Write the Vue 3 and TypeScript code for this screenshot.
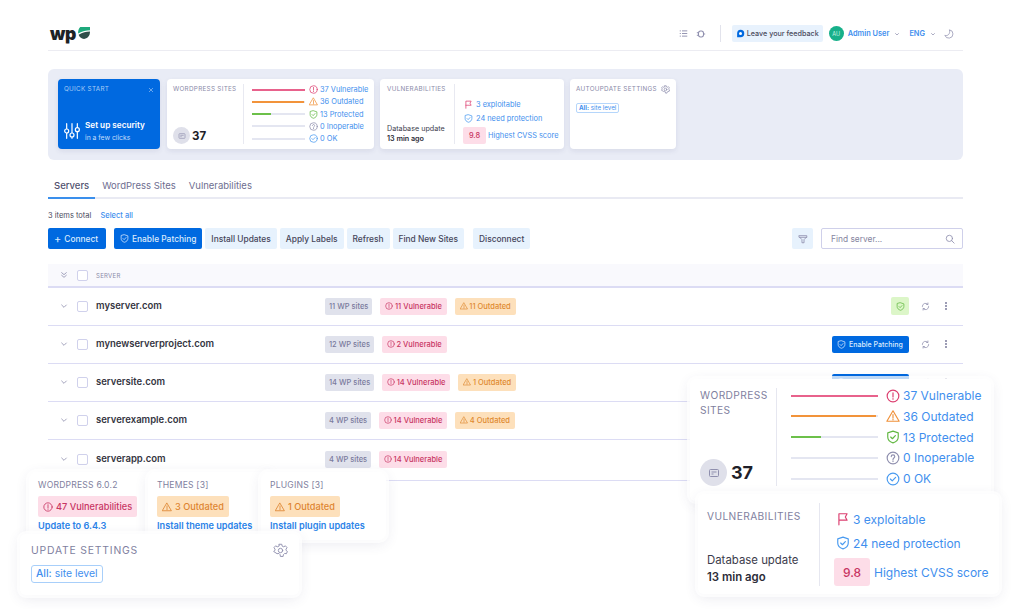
<script setup lang="ts">
type Tone = 'red' | 'orange' | 'green' | 'gray' | 'blue'

interface Status {
  label: string
  icon: string
  tone: Tone
  fill: number
  color: string
}

const statuses: Status[] = [
  { label: '37 Vulnerable', icon: 'i-alert', tone: 'red', fill: 100, color: '#e8628c' },
  { label: '36 Outdated', icon: 'i-warn', tone: 'orange', fill: 98, color: '#f2933a' },
  { label: '13 Protected', icon: 'i-shield', tone: 'green', fill: 35, color: '#6cc04a' },
  { label: '0 Inoperable', icon: 'i-help', tone: 'gray', fill: 0, color: '#e4e6f1' },
  { label: '0 OK', icon: 'i-check', tone: 'blue', fill: 0, color: '#e4e6f1' },
]

const tabs = ['Servers', 'WordPress Sites', 'Vulnerabilities']
const toolButtons = ['Install Updates', 'Apply Labels', 'Refresh', 'Find New Sites']

const servers = [
  { name: 'myserver.com', sites: '11 WP sites', vulnerable: '11 Vulnerable', outdated: '11 Outdated', action: 'ok' },
  { name: 'mynewserverproject.com', sites: '12 WP sites', vulnerable: '2 Vulnerable', outdated: '', action: 'patch' },
  { name: 'serversite.com', sites: '14 WP sites', vulnerable: '14 Vulnerable', outdated: '1 Outdated', action: 'patch' },
  { name: 'serverexample.com', sites: '4 WP sites', vulnerable: '14 Vulnerable', outdated: '4 Outdated', action: 'patch' },
  { name: 'serverapp.com', sites: '4 WP sites', vulnerable: '14 Vulnerable', outdated: '', action: 'patch' },
]
</script>

<template>
  <div class="page">
    <svg class="sprite" aria-hidden="true">
      <symbol id="i-alert" viewBox="0 0 24 24"><circle cx="12" cy="12" r="10" /><path d="M12 6.500v7M12 16.500v1" /></symbol>
      <symbol id="i-warn" viewBox="0 0 24 24"><path d="M12 3 22.500 21h-21zM12 9.500v6M12 17.500v1" /></symbol>
      <symbol id="i-shield" viewBox="0 0 24 24"><path d="M12 2 21 5v7c0 5-3.600 8.400-9 10-5.400-1.600-9-5-9-10V5zM8 12l3 3 5-5.500" /></symbol>
      <symbol id="i-help" viewBox="0 0 24 24"><circle cx="12" cy="12" r="10" /><path d="M9 9.500c0-4 6-4 6 0 0 2.500-3 2.500-3 5M12 17v1" /></symbol>
      <symbol id="i-check" viewBox="0 0 24 24"><circle cx="12" cy="12" r="10" /><path d="m7.500 12 3.200 3.200 5.800-6" /></symbol>
      <symbol id="i-flag" viewBox="0 0 24 24"><path d="M5 22V3h14l-3 5.500 3 5.500H5" /></symbol>
      <symbol id="i-gear" viewBox="0 0 24 24"><circle cx="12" cy="12" r="3.500" /><path d="M10 2h4l.6 3 2.600 1.100L19.800 4.500l2.700 3-1.800 2.400.3 2.100 2 1.500-1.500 3.600-2.900-.4-2 2-.4 2.800h-4.400l-.4-2.800-2-2-2.900.4L1 13.500l2-1.500.3-2.100L1.500 7.500l2.700-3 2.600 1.600L9.400 5z" /></symbol>
      <symbol id="i-search" viewBox="0 0 24 24"><circle cx="10.500" cy="10.500" r="7.500" /><path d="m16 16 6 6" /></symbol>
      <symbol id="i-filter" viewBox="0 0 24 24"><path d="M3 4h18v3l-6.500 6.500V21h-5v-7.500L3 7zM3 8h18" /></symbol>
      <symbol id="i-refresh" viewBox="0 0 24 24"><path d="M20.500 12a8.500 8.500 0 0 1-15 5.500M3.500 12a8.500 8.500 0 0 1 15-5.500M18.500 2.500v4h-4M5.500 21.500v-4h4" /></symbol>
      <symbol id="i-chevron" viewBox="0 0 24 24"><path d="m5 9 7 7 7-7" /></symbol>
      <symbol id="i-server" viewBox="0 0 24 24"><rect x="3" y="5" width="18" height="14" rx="2" /><path d="M7 10h10M7 14h4" /></symbol>
    </svg>

    <header class="topbar">
      <div class="logo">
        <span class="logo-text">wp</span>
        <svg class="logo-mark" viewBox="0 0 24 24"><path d="M6 2h18v6C17 8 10 10 2 14c0-5 1-9 4-12z" fill="#1ea97c" /><path d="M3 16c7-4 14-6 21-6 0 7-3 12-11 14C8 23 4 20 3 16z" fill="#2f4f4a" /></svg>
      </div>
      <div class="top-actions">
        <svg class="top-icon" viewBox="0 0 24 24"><path d="M2 5h3M8 5h14M2 12h3M8 12h14M2 19h3M8 19h14" /></svg>
        <svg class="top-icon bug" viewBox="0 0 24 24"><rect x="6" y="5" width="12" height="14" rx="5" /><path d="M2 9h4M2 15h4M18 12h4" /></svg>
        <span class="top-divider" />
        <span class="feedback">
          <svg class="feedback-icon" viewBox="0 0 24 24"><path d="M12 2a10 10 0 0 1 0 20H3V12A10 10 0 0 1 12 2z" fill="#0069e0" /><circle cx="12" cy="12" r="4" fill="#fff" /></svg>
          Leave your feedback
        </span>
        <span class="avatar">AU</span>
        <span class="user">Admin User</span>
        <svg class="mini-chevron" viewBox="0 0 24 24"><use href="#i-chevron" /></svg>
        <span class="user lang">ENG</span>
        <svg class="mini-chevron" viewBox="0 0 24 24"><use href="#i-chevron" /></svg>
        <svg class="moon" viewBox="0 0 24 24"><path d="M13 2a10 10 0 1 1-11 13c6 3 14-3 11-13z" /></svg>
      </div>
    </header>

    <section class="summary">
      <div class="card quick">
        <div class="quick-head">
          <span>QUICK START</span>
          <svg class="close" viewBox="0 0 24 24"><path d="m4 4 16 16M20 4 4 20" /></svg>
        </div>
        <div class="quick-body">
          <svg class="sliders" viewBox="0 0 24 24"><path d="M4 1v8M4 15v8M12 1v14M12 21v2M20 1v6M20 13v10" /><circle cx="4" cy="12" r="3" /><circle cx="12" cy="18" r="3" /><circle cx="20" cy="10" r="3" /></svg>
          <div>
            <div class="quick-title">Set up security</div>
            <div class="quick-sub">in a few clicks</div>
          </div>
        </div>
      </div>

      <div class="card sites">
        <div class="sites-left">
          <div class="card-label">WORDPRESS SITES</div>
          <div class="count">
            <span class="count-icon"><svg viewBox="0 0 24 24"><use href="#i-server" /></svg></span>
            <b>37</b>
          </div>
        </div>
        <div class="sites-right">
          <div v-for="s in statuses" :key="s.label" class="status">
            <span class="bar"><span class="bar-fill" :style="{ width: s.fill + '%', background: s.color }" /></span>
            <svg class="ico" :class="s.tone" viewBox="0 0 24 24"><use :href="'#' + s.icon" /></svg>
            <span>{{ s.label }}</span>
          </div>
        </div>
      </div>

      <div class="card vulns">
        <div class="vulns-left">
          <div class="card-label">VULNERABILITIES</div>
          <div class="db">Database update<br><b>13 min ago</b></div>
        </div>
        <div class="vulns-right">
          <div class="vline"><svg class="ico red" viewBox="0 0 24 24"><use href="#i-flag" /></svg>3 exploitable</div>
          <div class="vline"><svg class="ico blue" viewBox="0 0 24 24"><use href="#i-shield" /></svg>24 need protection</div>
          <div class="vline score-line"><span class="score">9.8</span>Highest CVSS score</div>
        </div>
      </div>

      <div class="card auto">
        <div class="auto-head">
          <span class="card-label">AUTOUPDATE SETTINGS</span>
          <svg class="ico gray" viewBox="0 0 24 24"><use href="#i-gear" /></svg>
        </div>
        <span class="level"><b>All:</b> site level</span>
      </div>
    </section>

    <nav class="tabs">
      <span v-for="(t, i) in tabs" :key="t" class="tab" :class="{ active: i === 0 }">{{ t }}</span>
    </nav>

    <div class="total">3 items total <a>Select all</a></div>

    <div class="toolbar">
      <button class="btn primary connect"><span class="plus">+</span> Connect</button>
      <button class="btn primary patch">
        <svg class="ico" viewBox="0 0 24 24"><use href="#i-shield" /></svg>
        Enable Patching
      </button>
      <button v-for="b in toolButtons" :key="b" class="btn">{{ b }}</button>
      <button class="btn disconnect">Disconnect</button>
      <button class="btn filter"><svg class="ico gray" viewBox="0 0 24 24"><use href="#i-filter" /></svg></button>
      <div class="search">
        <span>Find server...</span>
        <svg class="ico gray" viewBox="0 0 24 24"><use href="#i-search" /></svg>
      </div>
    </div>

    <div class="table">
      <div class="thead">
        <svg class="chev" viewBox="0 0 24 24"><path d="m5 5 7 6 7-6M5 13l7 6 7-6" /></svg>
        <span class="box" />
        <span class="th">SERVER</span>
      </div>
      <div v-for="s in servers" :key="s.name" class="row">
        <svg class="chev" viewBox="0 0 24 24"><use href="#i-chevron" /></svg>
        <span class="box" />
        <span class="name">{{ s.name }}</span>
        <div class="badges">
          <span class="badge grey">{{ s.sites }}</span>
          <span class="badge pink"><svg class="ico" viewBox="0 0 24 24"><use href="#i-alert" /></svg>{{ s.vulnerable }}</span>
          <span v-if="s.outdated" class="badge amber"><svg class="ico" viewBox="0 0 24 24"><use href="#i-warn" /></svg>{{ s.outdated }}</span>
        </div>
        <div class="row-actions">
          <span v-if="s.action === 'ok'" class="ok-box"><svg class="ico green" viewBox="0 0 24 24"><use href="#i-shield" /></svg></span>
          <button v-else class="row-patch"><svg class="ico" viewBox="0 0 24 24"><use href="#i-shield" /></svg>Enable Patching</button>
          <svg class="ico gray refresh" viewBox="0 0 24 24"><use href="#i-refresh" /></svg>
          <span class="dots" />
        </div>
      </div>
    </div>

    <!-- floating callouts over the table -->
    <div class="float f-sites">
      <div class="f-sites-left">
        <div class="f-label">WORDPRESS<br>SITES</div>
        <div class="f-count">
          <span class="f-count-icon"><svg viewBox="0 0 24 24"><use href="#i-server" /></svg></span>
          <b>37</b>
        </div>
      </div>
      <div class="f-sites-right">
        <div v-for="s in statuses" :key="s.label" class="f-status">
          <span class="f-bar"><span class="bar-fill" :style="{ width: s.fill + '%', background: s.color }" /></span>
          <svg class="ico" :class="s.tone" viewBox="0 0 24 24"><use :href="'#' + s.icon" /></svg>
          <span>{{ s.label }}</span>
        </div>
      </div>
    </div>

    <div class="float f-vulns">
      <div class="f-vulns-left">
        <div class="f-label f-vulns-label">VULNERABILITIES</div>
        <div class="f-db">Database update<br><b>13 min ago</b></div>
      </div>
      <div class="f-vulns-right">
        <div class="f-line"><svg class="ico red" viewBox="0 0 24 24"><use href="#i-flag" /></svg>3 exploitable</div>
        <div class="f-line"><svg class="ico blue" viewBox="0 0 24 24"><use href="#i-shield" /></svg>24 need protection</div>
        <div class="f-line f-score-line"><span class="f-score">9.8</span>Highest CVSS score</div>
      </div>
    </div>

    <div class="float mini m-wp">
      <div class="m-label">WORDPRESS 6.0.2</div>
      <span class="m-chip pink"><svg class="ico" viewBox="0 0 24 24"><use href="#i-alert" /></svg>47 Vulnerabilities</span>
      <a class="m-link">Update to 6.4.3</a>
    </div>
    <div class="float mini m-themes">
      <div class="m-label">THEMES [3]</div>
      <span class="m-chip amber"><svg class="ico" viewBox="0 0 24 24"><use href="#i-warn" /></svg>3 Outdated</span>
      <a class="m-link">Install theme updates</a>
    </div>
    <div class="float mini m-plugins">
      <div class="m-label">PLUGINS [3]</div>
      <span class="m-chip amber"><svg class="ico" viewBox="0 0 24 24"><use href="#i-warn" /></svg>1 Outdated</span>
      <a class="m-link">Install plugin updates</a>
    </div>

    <div class="float m-update">
      <div class="m-update-head">
        <span>UPDATE SETTINGS</span>
        <svg class="ico gray" viewBox="0 0 24 24"><use href="#i-gear" /></svg>
      </div>
      <span class="m-level"><b>All:</b> site level</span>
    </div>
  </div>
</template>

<style>
html,
body {
  margin: 0;
  background: #fff;
}
</style>

<style scoped>
.page {
  position: relative;
  width: 1024px;
  height: 609px;
  overflow: hidden;
  box-sizing: border-box;
  padding: 17px 61px 0 48px;
  background: #fff;
  font-family: Inter, "Liberation Sans", sans-serif;
  color: #3c3c4c;
}

.sprite {
  position: absolute;
  width: 0;
  height: 0;
}

.ico {
  flex: none;
  fill: none;
  stroke: currentColor;
  stroke-width: 2;
  stroke-linecap: round;
  stroke-linejoin: round;
}

.red { color: #dc3f70; }
.orange { color: #f0913a; }
.green { color: #62b842; }
.gray { color: #8f8fae; }
.blue { color: #4a9bf0; }

/* top bar */
.topbar {
  display: flex;
  align-items: center;
  justify-content: space-between;
  height: 34px;
  padding: 0 9px 0 2px;
  border-bottom: 1px solid #ececf2;
  box-sizing: border-box;
}

.logo {
  display: flex;
  align-items: center;
  gap: 1px;
}

.logo-text {
  font-size: 17.500px;
  font-weight: 900;
  line-height: 20px;
  letter-spacing: -0.4px;
  color: #1d2326;
}

.logo-mark {
  width: 13px;
  height: 13px;
  margin-top: -2px;
}

.top-actions {
  display: flex;
  align-items: center;
}

.top-icon {
  width: 9px;
  height: 9px;
  fill: none;
  stroke: #8f8fae;
  stroke-width: 2.500;
  margin-right: 8px;
}

.top-icon.bug {
  width: 10px;
  height: 10px;
  margin-right: 14px;
}

.top-divider {
  width: 1px;
  height: 17px;
  background: #e2e3ec;
  margin-right: 11px;
}

.feedback {
  display: flex;
  align-items: center;
  gap: 2px;
  height: 17px;
  padding: 0 4px;
  border-radius: 2px;
  background: #e8f2fd;
  font-size: 7.200px;
  font-weight: 500;
  color: #4a4a5c;
}

.feedback-icon {
  width: 9px;
  height: 9px;
}

.avatar {
  display: flex;
  align-items: center;
  justify-content: center;
  width: 15px;
  height: 15px;
  margin: 0 4px 0 6px;
  border-radius: 50%;
  background: #17b08a;
  color: #c8f0e4;
  font-size: 5.500px;
}

.user {
  font-size: 7.400px;
  font-weight: 600;
  color: #3f8fee;
}

.lang {
  margin-left: 9px;
}

.mini-chevron {
  width: 6px;
  height: 6px;
  margin-left: 5px;
  fill: none;
  stroke: #8f8fae;
  stroke-width: 3;
}

.moon {
  width: 10px;
  height: 10px;
  margin-left: 8px;
  fill: none;
  stroke: #8f8fae;
  stroke-width: 1.800;
}

/* summary strip */
.summary {
  display: flex;
  gap: 6px;
  box-sizing: border-box;
  height: 91px;
  margin-top: 18px;
  padding: 10px;
  border-radius: 6px;
  background: #e9ecf6;
}

.card {
  box-sizing: border-box;
  height: 70px;
  border-radius: 4px;
  background: #fff;
  box-shadow: 0 2px 5px rgba(70, 70, 120, 0.1);
}

.card-label {
  font-size: 6.300px;
  letter-spacing: 0.3px;
  line-height: 9px;
  color: #8a8aa8;
}

.quick {
  display: flex;
  flex-direction: column;
  justify-content: space-between;
  width: 102px;
  margin-right: 1px;
  padding: 6px 6px 0;
  background: #0069e0;
  color: #fff;
}

.quick-head {
  display: flex;
  align-items: center;
  justify-content: space-between;
  font-size: 6.300px;
  letter-spacing: 0.3px;
  line-height: 9px;
  color: #a9cdf6;
}

.close {
  width: 6px;
  height: 6px;
  fill: none;
  stroke: #cfe3fb;
  stroke-width: 2;
}

.quick-body {
  display: flex;
  align-items: center;
  gap: 5px;
  margin-bottom: 6px;
}

.sliders {
  width: 16px;
  height: 18px;
  fill: #0069e0;
  stroke: #fff;
  stroke-width: 1.800;
  stroke-linecap: round;
}

.quick-title {
  font-size: 8.200px;
  font-weight: 600;
  line-height: 12px;
}

.quick-sub {
  margin-top: 2px;
  font-size: 6.800px;
  line-height: 10px;
  color: #c3dcfa;
}

.sites {
  display: flex;
  width: 207px;
  padding: 5px 0 5px 6px;
}

.sites-left {
  display: flex;
  flex-direction: column;
  justify-content: space-between;
  width: 70px;
  border-right: 1px solid #e8e9f1;
}

.sites-left .card-label,
.vulns-left .card-label {
  margin-top: 1px;
}

.count {
  display: flex;
  align-items: center;
  gap: 2px;
}

.count b {
  font-size: 11.500px;
  font-weight: 700;
  color: #1f1f29;
}

.count-icon {
  display: flex;
  align-items: center;
  justify-content: center;
  width: 17px;
  height: 17px;
  border-radius: 50%;
  background: #dfe0ea;
}

.count-icon svg {
  width: 8px;
  height: 8px;
  fill: none;
  stroke: #8f8fae;
  stroke-width: 2;
}

.sites-right {
  display: flex;
  flex-direction: column;
  justify-content: space-between;
  margin-left: 8px;
}

.status {
  display: flex;
  align-items: center;
  height: 11px;
  font-size: 7.400px;
  color: #3f8fee;
}

.status .ico {
  width: 9px;
  height: 9px;
  margin: 0 2px 0 4px;
}

.bar {
  width: 53px;
  height: 2px;
  background: #e4e6f1;
}

.bar-fill {
  display: block;
  height: 100%;
}

.vulns {
  display: flex;
  width: 184px;
  padding: 5px 0 5px 7px;
}

.vulns-left {
  display: flex;
  flex-direction: column;
  justify-content: space-between;
  width: 67px;
  border-right: 1px solid #e8e9f1;
}

.db {
  font-size: 7.200px;
  line-height: 10px;
  color: #3c3c4c;
}

.db b {
  font-weight: 600;
  color: #2c2c38;
}

.vulns-right {
  display: flex;
  flex-direction: column;
  justify-content: flex-end;
  margin-left: 8px;
}

.vline {
  display: flex;
  align-items: center;
  gap: 3px;
  height: 14px;
  font-size: 7.400px;
  color: #3f8fee;
}

.vline .ico {
  width: 9px;
  height: 9px;
  margin-left: 1px;
}

.score-line {
  height: 17px;
  margin-top: 2px;
  gap: 2px;
}

.score {
  display: flex;
  align-items: center;
  justify-content: center;
  width: 23px;
  height: 17px;
  border-radius: 2px;
  background: #fddde8;
  color: #c83563;
  font-weight: 500;
}

.auto {
  width: 106px;
  padding: 6px 6px;
}

.auto-head {
  display: flex;
  align-items: center;
  justify-content: space-between;
}

.auto-head .ico {
  width: 9px;
  height: 9px;
}

.level {
  display: inline-block;
  margin-top: 3px;
  padding: 0 2px;
  border: 1px solid #b5d6fb;
  border-radius: 2px;
  font-size: 6.200px;
  line-height: 8px;
  color: #3f8fee;
}

.level b {
  font-weight: 700;
}

/* tabs */
.tabs {
  display: flex;
  gap: 1px;
  height: 29px;
  margin-top: 10px;
  box-sizing: border-box;
  border-bottom: 2px solid #e9eaf3;
}

.tab {
  height: 29px;
  box-sizing: border-box;
  padding: 0 6px;
  font-size: 9.500px;
  line-height: 31px;
  color: #6e6e90;
}

.tab.active {
  padding: 0 6px;
  border-bottom: 2px solid #3a8fec;
  color: #50506e;
  font-weight: 500;
}

.total {
  margin-top: 12px;
  font-size: 7.500px;
  line-height: 10px;
  color: #4a4a5c;
}

.total a {
  margin-left: 7px;
  color: #3f8fee;
  font-weight: 500;
}

/* toolbar */
.toolbar {
  display: flex;
  align-items: center;
  gap: 3px;
  height: 21px;
  margin-top: 7px;
}

.btn {
  height: 21px;
  padding: 0 6px;
  border: 0;
  border-radius: 2px;
  background: #e7f2fd;
  font-family: inherit;
  font-size: 8.400px;
  font-weight: 500;
  color: #45455a;
}

.btn.primary {
  display: flex;
  align-items: center;
  background: #0069e0;
  color: #dcebfd;
}

.connect {
  width: 58px;
  gap: 3px;
  margin-right: 5px;
}

.plus {
  font-size: 11px;
  font-weight: 400;
}

.patch {
  gap: 3px;
}

.patch .ico {
  width: 9px;
  height: 9px;
}

.disconnect {
  margin-left: 6px;
}

.filter {
  display: flex;
  align-items: center;
  justify-content: center;
  width: 21px;
  padding: 0;
  margin-left: auto;
  margin-right: 5px;
}

.filter .ico {
  width: 10px;
  height: 10px;
}

.search {
  display: flex;
  align-items: center;
  justify-content: space-between;
  box-sizing: border-box;
  width: 142px;
  height: 21px;
  padding: 0 7px 0 9px;
  border: 1px solid #cfd0ea;
  border-radius: 2px;
  font-size: 8.400px;
  color: #8585a0;
}

.search .ico {
  width: 10px;
  height: 10px;
}

/* table */
.table {
  margin-top: 15px;
}

.thead,
.row {
  display: flex;
  align-items: center;
  box-sizing: border-box;
  padding-left: 12px;
  border-bottom: 1px solid #dcdcf4;
}

.thead {
  height: 24px;
  background: #f9f9fd;
  border-bottom-width: 2px;
}

.row {
  height: 38px;
  padding-bottom: 1px;
}

.row:last-child {
  height: 41px;
  padding-bottom: 2px;
}

.chev {
  width: 8px;
  height: 8px;
  fill: none;
  stroke: #8f8fae;
  stroke-width: 2.500;
  stroke-linecap: round;
  stroke-linejoin: round;
}

.box {
  flex: none;
  box-sizing: border-box;
  width: 11px;
  height: 11px;
  margin: 0 8px 0 9px;
  border: 1px solid #d0d1ec;
  border-radius: 2px;
  background: #fff;
}

.th {
  font-size: 6px;
  letter-spacing: 0.3px;
  color: #8a8aa8;
}

.name {
  flex: none;
  width: 229px;
  font-size: 9.500px;
  font-weight: 600;
  color: #35353f;
  margin-top: -2px;
}

.badges {
  display: flex;
  gap: 8px;
}

.badge {
  display: flex;
  align-items: center;
  gap: 1.500px;
  height: 17px;
  padding: 0 4px;
  border-radius: 2px;
  font-size: 7.500px;
  font-weight: 500;
}

.badge .ico {
  width: 8px;
  height: 8px;
}

.badge.grey {
  background: #e0e2ec;
  color: #7a7a9c;
}

.badge.pink {
  padding: 0 5px;
  background: #fddde8;
  color: #c83563;
}

.badge.amber {
  padding: 0 5px;
  background: #fde0bb;
  color: #e08a30;
}

.row-actions {
  display: flex;
  align-items: center;
  margin-left: auto;
}

.ok-box {
  display: flex;
  align-items: center;
  justify-content: center;
  width: 18px;
  height: 18px;
  border-radius: 2px;
  background: #dcf6c8;
}

.ok-box .ico {
  width: 9px;
  height: 9px;
}

.row-patch {
  display: flex;
  align-items: center;
  gap: 3px;
  height: 17px;
  width: 77px;
  padding: 0 5px;
  border: 0;
  border-radius: 2px;
  background: #0069e0;
  font-family: inherit;
  font-size: 7px;
  font-weight: 500;
  color: #dcebfd;
}

.row-patch .ico {
  width: 9px;
  height: 9px;
}

.refresh {
  width: 9px;
  height: 9px;
  margin-left: 12px;
}

.dots {
  position: relative;
  width: 2px;
  height: 2px;
  margin: 0 16px 0 15px;
  border-radius: 50%;
  background: #7d7d9c;
  box-shadow: 0 -3px 0 #7d7d9c, 0 3px 0 #7d7d9c;
}

/* floating callouts */
.float {
  position: absolute;
  box-sizing: border-box;
  border-radius: 6px;
  background: #fff;
  box-shadow: 0 0 0 3px rgba(255, 255, 255, 0.75), 0 3px 14px rgba(60, 60, 110, 0.12);
}

.f-sites {
  left: 690px;
  top: 379px;
  display: flex;
  width: 301px;
  height: 122px;
  padding: 9px 0 15px 10px;
}

.f-sites-left {
  display: flex;
  flex-direction: column;
  justify-content: space-between;
  width: 76px;
  border-right: 1px solid #e6e7f0;
}

.f-label {
  font-size: 10.200px;
  letter-spacing: 0.4px;
  line-height: 15px;
  color: #7f7fa0;
}

.f-vulns-label {
  margin-top: 6px;
}

.f-count {
  display: flex;
  align-items: center;
  gap: 4px;
}

.f-count b {
  font-size: 18px;
  font-weight: 700;
  color: #1f1f29;
}

.f-count-icon {
  display: flex;
  align-items: center;
  justify-content: center;
  width: 27px;
  height: 27px;
  border-radius: 50%;
  background: #dfe0ea;
}

.f-count-icon svg {
  width: 12px;
  height: 12px;
  fill: none;
  stroke: #8f8fae;
  stroke-width: 2;
}

.f-sites-right {
  display: flex;
  flex-direction: column;
  justify-content: space-between;
  margin-left: 14px;
}

.f-status {
  display: flex;
  align-items: center;
  height: 15px;
  font-size: 12px;
  color: #3f8fee;
}

.f-status .ico {
  width: 14px;
  height: 14px;
  margin: 0 3px 0 8px;
}

.f-bar {
  width: 87px;
  height: 2px;
  background: #e4e6f1;
}

.f-vulns {
  left: 698px;
  top: 494px;
  display: flex;
  width: 301px;
  height: 100px;
  padding: 9px 0 8px 9px;
}

.f-vulns-left {
  display: flex;
  flex-direction: column;
  justify-content: space-between;
  width: 112px;
  border-right: 1px solid #e6e7f0;
}

.f-db {
  font-size: 11.400px;
  line-height: 17px;
  color: #3c3c4c;
}

.f-db b {
  font-weight: 600;
  color: #2c2c38;
}

.f-vulns-right {
  display: flex;
  flex-direction: column;
  justify-content: flex-end;
  margin-left: 14px;
}

.f-line {
  display: flex;
  align-items: center;
  gap: 3px;
  height: 24px;
  font-size: 12px;
  color: #3f8fee;
}

.f-line .ico {
  width: 14px;
  height: 14px;
  margin-left: 2px;
}

.f-score-line {
  height: 28px;
  margin-top: 3px;
  gap: 4px;
}

.f-score {
  display: flex;
  align-items: center;
  justify-content: center;
  width: 36px;
  height: 28px;
  border-radius: 3px;
  background: #fddde8;
  color: #c83563;
  font-weight: 500;
}

.mini {
  top: 472px;
  height: 68px;
  padding: 8px 9px;
  border-radius: 7px;
}

.m-wp {
  left: 29px;
  width: 132px;
}

.m-themes {
  left: 148px;
  width: 125px;
}

.m-plugins {
  left: 261px;
  width: 125px;
}

.m-label {
  font-size: 8.600px;
  letter-spacing: 0.2px;
  line-height: 10px;
  color: #7f7fa0;
}

.m-chip {
  display: inline-flex;
  align-items: center;
  gap: 3px;
  height: 21px;
  margin-top: 6px;
  padding: 0 5px;
  border-radius: 2px;
  font-size: 9.200px;
  font-weight: 500;
}

.m-chip .ico {
  width: 10px;
  height: 10px;
}

.m-chip.pink {
  background: #fddde8;
  color: #c83563;
}

.m-chip.amber {
  background: #fde0bb;
  color: #dd8430;
}

.m-link {
  display: block;
  margin-top: 2px;
  font-size: 9.200px;
  font-weight: 600;
  line-height: 13px;
  color: #2c83e8;
}

.m-update {
  left: 20px;
  top: 534px;
  width: 279px;
  height: 61px;
  padding: 9px 11px;
}

.m-update-head {
  display: flex;
  align-items: center;
  justify-content: space-between;
  font-size: 10.400px;
  letter-spacing: 0.8px;
  color: #7f7fa0;
}

.m-update-head .ico {
  width: 15px;
  height: 15px;
  stroke-width: 1.500;
}

.m-level {
  display: inline-block;
  margin-top: 7px;
  padding: 0 4px;
  border: 1px solid #a8cffa;
  border-radius: 3px;
  font-size: 10.400px;
  line-height: 16px;
  color: #3f8fee;
}

.m-level b {
  font-weight: 500;
}
</style>
